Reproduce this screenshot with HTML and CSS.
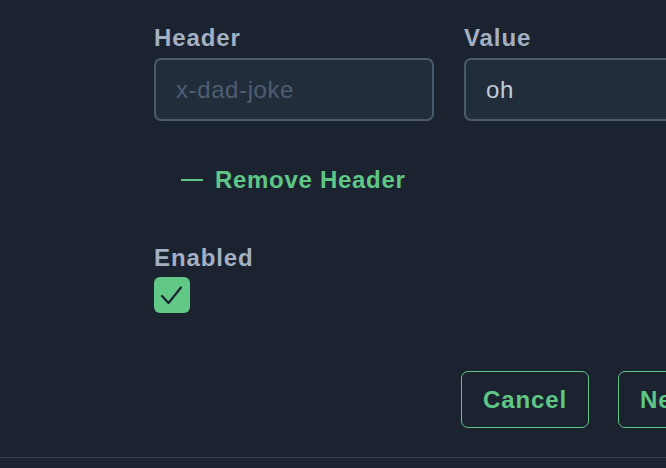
FILE: index.html
```html
<!DOCTYPE html>
<html>
<head>
<meta charset="utf-8">
<link rel="stylesheet" href="styles.css">
</head>
<body>
<div class="page">
  <div class="form">
    <div class="fields">
      <div class="field">
        <label class="label">Header</label>
        <input class="input" placeholder="x-dad-joke">
      </div>
      <div class="field">
        <label class="label">Value</label>
        <input class="input" value="oh">
      </div>
    </div>
    <button class="remove"><span class="dash"></span>Remove Header</button>
    <div class="enabled">
      <div class="label">Enabled</div>
      <span class="check">
        <svg width="36" height="36" viewBox="0 0 36 36"><path d="M8 19 L14.5 26 L27 10.5" fill="none" stroke="#1b2330" stroke-width="2.2" stroke-linecap="round" stroke-linejoin="round"/></svg>
      </span>
    </div>
    <div class="actions">
      <button class="btn">Cancel</button>
      <button class="btn">Next</button>
    </div>
  </div>
  <div class="rule"></div>
</div>
</body>
</html>
```
FILE: styles.css
```css
html, body {
  margin: 0;
  padding: 0;
  background: #1b2330;
  overflow: hidden;
}
.page {
  width: 666px;
  height: 468px;
  font-family: "Liberation Sans", Arial, sans-serif;
  display: flex;
  flex-direction: column;
}
.form {
  padding: 23px 0 0 154px;
  flex: 1;
}
.fields {
  display: grid;
  grid-template-columns: 280px 280px;
  column-gap: 30px;
}
.field {
  display: flex;
  flex-direction: column;
}
.label {
  display: block;
  font-size: 24px;
  line-height: 30px;
  font-weight: 700;
  letter-spacing: 0.9px;
  color: #a3b0c2;
  margin-bottom: 5px;
}
.input {
  box-sizing: border-box;
  width: 280px;
  height: 63px;
  background: #222d3c;
  border: 2px solid #4a5a6d;
  border-radius: 7px;
  padding: 0 0 0 20px;
  font-family: "Liberation Sans", Arial, sans-serif;
  font-size: 24px;
  letter-spacing: 0.6px;
  color: #c3ccd8;
  outline: none;
}
.input::placeholder {
  color: #4e5d71;
}
.remove {
  display: flex;
  align-items: center;
  gap: 12px;
  margin: 44px 0 0 27px;
  padding: 0;
  background: none;
  border: none;
  font-family: "Liberation Sans", Arial, sans-serif;
  font-size: 24px;
  line-height: 30px;
  font-weight: 700;
  letter-spacing: 0.7px;
  color: #5fc785;
}
.dash {
  width: 22px;
  height: 2px;
  background: #5fc785;
}
.enabled {
  margin-top: 48px;
}
.enabled .label {
  margin-bottom: 4px;
}
.check {
  display: block;
  width: 36px;
  height: 36px;
  border-radius: 6px;
  background: #62c886;
}
.check svg {
  display: block;
}
.actions {
  display: flex;
  gap: 29px;
  margin: 58px 0 0 307px;
}
.btn {
  box-sizing: border-box;
  height: 57px;
  padding: 0 21px;
  background: transparent;
  border: 1.5px solid #5fc785;
  border-radius: 7px;
  font-family: "Liberation Sans", Arial, sans-serif;
  font-size: 24px;
  font-weight: 700;
  letter-spacing: 0.9px;
  color: #5fc785;
  white-space: nowrap;
}
.rule {
  height: 1px;
  background: #33414e;
  margin-bottom: 10px;
}
```
